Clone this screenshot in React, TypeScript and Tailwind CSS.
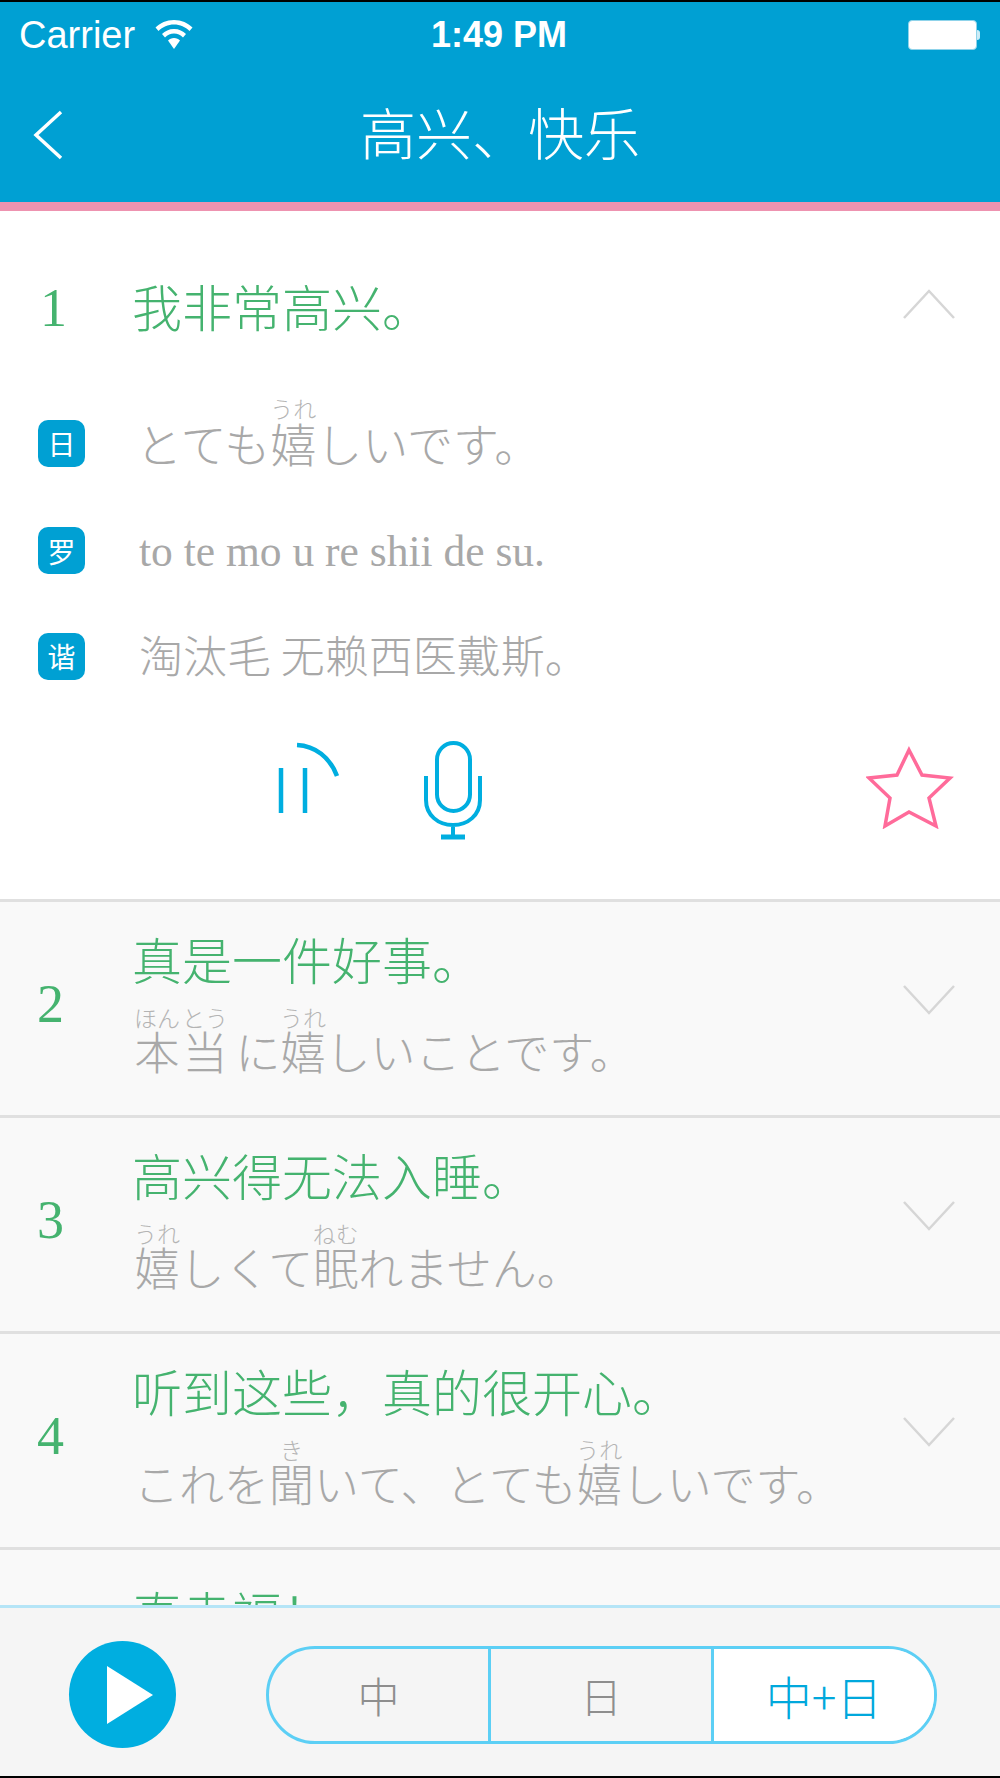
import type { ReactNode } from "react"

const sans = "font-['Noto_Sans_CJK_SC','Noto_Sans_CJK_JP',sans-serif]"
const jp = "font-['Noto_Sans_CJK_JP','Noto_Sans_CJK_SC',sans-serif]"

const R = ({ b, t, extra = "" }: { b: string; t: string; extra?: string }) => (
  <ruby className={`[ruby-align:center] ${extra}`}>
    {b}
    <rt className="text-[23px] leading-[24px] font-light text-[#b4b4b4] tracking-normal">{t}</rt>
  </ruby>
)

const Chevron = ({ up }: { up?: boolean }) => (
  <svg width="52" height="30" viewBox="0 0 52 30" fill="none" stroke="#d6d6d6" strokeWidth="2.5">
    <path d={up ? "M1 29L26 2L51 29" : "M1 1L26 28L51 1"} />
  </svg>
)

const Badge = ({ children }: { children: string }) => (
  <div className={`w-[47px] h-[47px] rounded-[10px] bg-[#00a0d3] text-white text-[28px] leading-none flex items-center justify-center ${sans}`}>
    {children}
  </div>
)

const rows: { n: number; zh: string; jpText: ReactNode }[] = [
  {
    n: 2,
    zh: "真是一件好事。",
    jpText: (
      <>
        <R b="本" t="ほん" extra="mr-[2px]" /><R b="当" t="とう" extra="mr-[8px]" />に<R b="嬉" t="うれ" />しいことです。
      </>
    ),
  },
  {
    n: 3,
    zh: "高兴得无法入睡。",
    jpText: (
      <>
        <R b="嬉" t="うれ" />しくて<R b="眠" t="ねむ" />れません。
      </>
    ),
  },
  {
    n: 4,
    zh: "听到这些，真的很开心。",
    jpText: (
      <>
        これを<R b="聞" t="き" />いて、とても<R b="嬉" t="うれ" />しいです。
      </>
    ),
  },
]

export default function App() {
  return (
    <div className={`w-[1000px] h-[1778px] flex flex-col overflow-hidden bg-white border-t-2 border-b-2 border-black ${sans}`}>
      {/* nav */}
      <div className="h-[200px] shrink-0 bg-[#00a0d3] text-white relative">
        <div className="flex items-center justify-between h-[66px] pl-[19px] pr-[20px] font-['Liberation_Sans',sans-serif]">
          <div className="flex items-center gap-[20px] text-[38px] font-light">
            <span>Carrier</span>
            <svg width="38" height="30" viewBox="0 0 38 30" fill="white">
              <path d="M19 0C11.5 0 5 3 0.5 7.5L3.5 11C7.5 7 13 4.5 19 4.5C25 4.5 30.5 7 34.5 11L37.5 7.5C33 3 26.5 0 19 0Z" />
              <path d="M19 9C14 9 10 11 7 14L10 17.5C12.5 15 15.5 13.5 19 13.5C22.5 13.5 25.5 15 28 17.5L31 14C28 11 24 9 19 9Z" />
              <path d="M19 18C16.5 18 14.5 19 13 20.5L19 29L25 20.5C23.5 19 21.5 18 19 18Z" />
            </svg>
          </div>
          <span className="absolute left-[431px] top-[13px] text-[36px] leading-[40px] font-bold">1:49 PM</span>
          <div className="flex items-center">
            <div className="w-[69px] h-[30px] rounded-[4px] bg-white border border-[#8fd3ea]" />
            <div className="w-[3px] h-[10px] bg-white/80 rounded-r-sm" />
          </div>
        </div>
        <div className="flex items-center h-[134px] relative">
          <svg className="ml-[33px]" width="30" height="50" viewBox="0 0 30 50" fill="none" stroke="white" strokeWidth="3.5">
            <path d="M28 2L3 25L28 48" />
          </svg>
          <div className="absolute inset-x-0 top-[28px] text-center text-[56px] leading-[70px] font-light">
            高兴、快乐
          </div>
        </div>
      </div>
      <div className="h-[9px] shrink-0 bg-[#ee93b0]" />

      {/* list */}
      <div className="flex-1 overflow-hidden">
        <div className="border-b-[3px] border-[#e0e0e0] h-[691px]">
          <div className="flex items-center pt-[67px] h-[177px] pb-[50px]">
            <div className="w-[132px] pl-[40px] text-[54px] leading-none text-[#45b36f] font-['Liberation_Serif',serif]">1</div>
            <div className="flex-1 -mt-[6px] text-[50px] leading-[60px] font-light text-[#45b36f]">我非常高兴。</div>
            <div className="mr-[45px] -mt-[8px]"><Chevron up /></div>
          </div>
          <div className="flex items-center h-[110px] pl-[38px]">
            <Badge>日</Badge>
            <div className={`ml-[51px] -mt-[20px] text-[46px] leading-[56px] font-light text-[#a8a8a8] ${jp}`}>
              とても<R b="嬉" t="うれ" />しいです。
            </div>
          </div>
          <div className="flex items-center h-[105px] pl-[38px]">
            <Badge>罗</Badge>
            <div className="ml-[54px] text-[43.5px] leading-[56px] text-[#a8a8a8] font-['Liberation_Serif',serif]">
              to te mo u re shii de su.
            </div>
          </div>
          <div className="flex items-center h-[106px] pl-[38px]">
            <Badge>谐</Badge>
            <div className="ml-[54px] -mt-[4px] text-[44px] leading-[56px] font-light text-[#a8a8a8]">淘汰毛 无赖西医戴斯。</div>
          </div>
          <div className="flex items-start mt-[36px] pl-[275px] pr-[46px]">
            <svg className="-mt-[4px]" width="66" height="74" viewBox="0 0 66 74" fill="none" stroke="#00aee0" strokeWidth="4.5">
              <path d="M6 27V72M30 27V72M22 4C40 5 55 16 62 35" />
            </svg>
            <svg className="ml-[82px] -mt-[5px]" width="60" height="100" viewBox="0 0 60 100" fill="none" stroke="#00aee0" strokeWidth="4">
              <rect x="14" y="3" width="33" height="68" rx="16.5" />
              <path d="M3 36V60C3 75 15 85 30 85C45 85 57 75 57 60V36M30 85V97" />
              <path d="M18 97H42" strokeWidth="5" />
            </svg>
            <svg className="ml-auto" width="88" height="84" viewBox="0 0 88 84" fill="none" stroke="#ff6b9a" strokeWidth="3.5">
              <path d="M43 5L56 30L84 33L63 53L70 81L43 67L19 81L24 53L3 33L31 30Z" />
            </svg>
          </div>
        </div>

        {rows.map((r) => (
          <Row key={r.n} n={r.n} zh={r.zh} jpText={r.jpText} />
        ))}
        <div className="bg-[#f9f9f9] h-[80px] pl-[132px] pt-[32px] text-[#45b36f] text-[50px] leading-[60px] font-light">
          真幸福！
        </div>
      </div>

      {/* bottom bar */}
      <div className="h-[171px] shrink-0 bg-[#f5f5f5] border-t-[3px] border-[#b5e5f7] flex items-start pt-[33px] pl-[69px]">
        <div className="w-[107px] h-[107px] rounded-full bg-[#00aee0] flex items-center justify-center">
          <svg className="ml-[14px]" width="46" height="58" viewBox="0 0 46 58" fill="white">
            <path d="M0 0L46 29L0 58Z" />
          </svg>
        </div>
        <div className="ml-[90px] mt-[5px] w-[671px] h-[98px] rounded-[49px] border-[3px] border-[#5ccff5] flex overflow-hidden text-[42px] leading-[86px]">
          <div className="w-[219px] flex items-center justify-center text-[#8e8e8e] font-light">中</div>
          <div className="w-[226px] border-x-[3px] border-[#5ccff5] flex items-center justify-center text-[#8e8e8e] font-light">日</div>
          <div className="flex-1 bg-white flex items-center justify-center text-[#00a8dc] text-[46px] font-light">中+日</div>
        </div>
      </div>
    </div>
  )
}

function Row({ n, zh, jpText }: { n: number; zh: string; jpText: ReactNode }) {
  return (
    <div className="flex h-[216px] bg-[#f9f9f9] border-b-[3px] border-[#e0e0e0]">
      <div className="w-[132px] pl-[37px] pt-[72px] text-[54px] leading-[60px] text-[#45b36f] font-['Liberation_Serif',serif]">{n}</div>
      <div className="flex-1 pt-[26px]">
        <div className="text-[50px] leading-[60px] font-light text-[#45b36f]">{zh}</div>
        <div className={`mt-[18px] pl-[2px] text-[45px] leading-[56px] font-light text-[#a8a8a8] ${jp}`}>{jpText}</div>
      </div>
      <div className="pt-[83px] pr-[45px]"><Chevron /></div>
    </div>
  )
}
